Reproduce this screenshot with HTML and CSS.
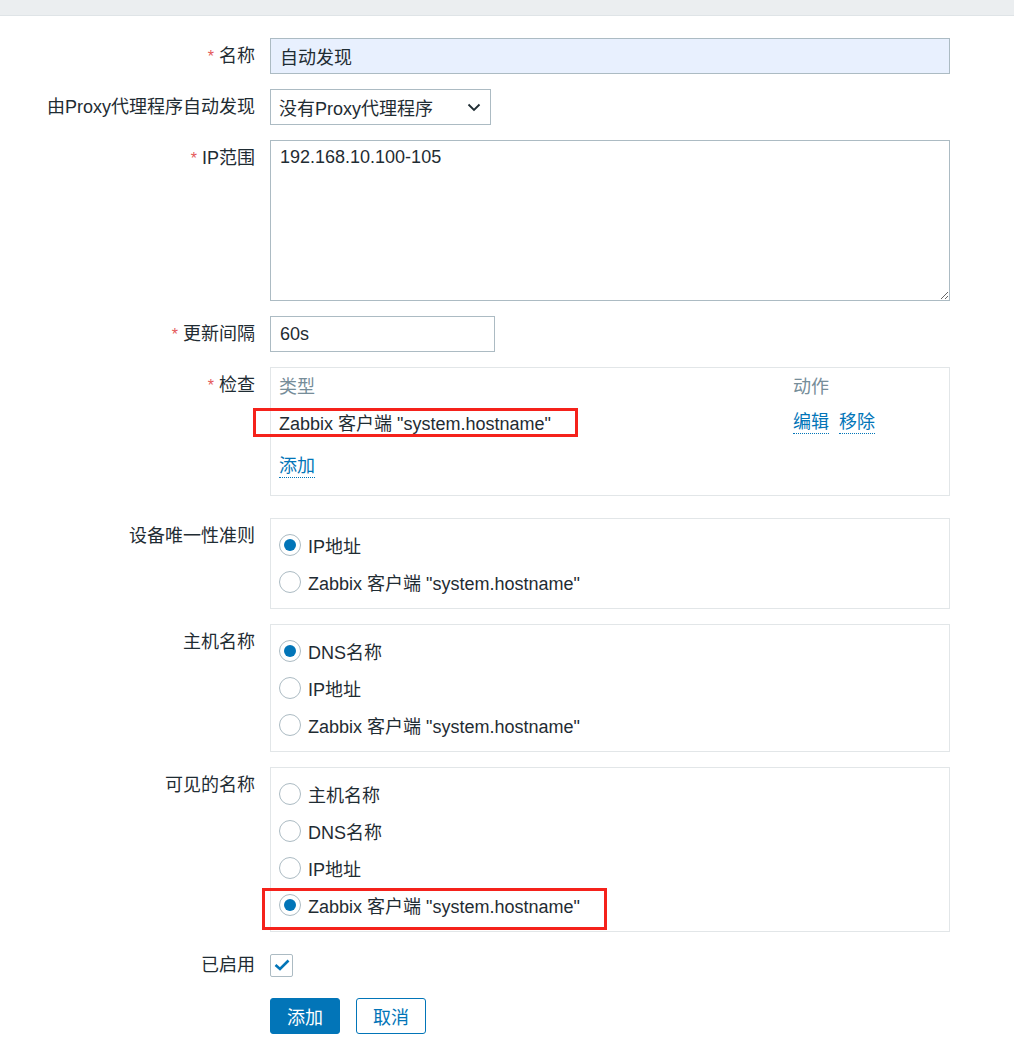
FILE: index.html
```html
<!DOCTYPE html>
<html lang="zh-CN">
<head>
  <meta charset="UTF-8">
  <meta name="viewport" content="width=device-width, initial-scale=1.0">
  <title>自动发现</title>
  <link rel="stylesheet" href="styles.css">
</head>
<body>

  <div class="top-bar"></div>

  <form class="form">
    <label class="label"><span class="req">*</span> 名称</label>
    <div class="field">
      <input class="input input-wide autofill" type="text" value="自动发现">
    </div>

    <label class="label">由Proxy代理程序自动发现</label>
    <div class="field">
      <div class="select">
        <span>没有Proxy代理程序</span>
        <svg width="14" height="9" viewBox="0 0 14 9"><path d="M1.5 1.5 L7 7 L12.5 1.5" fill="none" stroke="#1f2c33" stroke-width="1.8"/></svg>
      </div>
    </div>

    <label class="label"><span class="req">*</span> IP范围</label>
    <div class="field">
      <textarea class="textarea">192.168.10.100-105</textarea>
    </div>

    <label class="label"><span class="req">*</span> 更新间隔</label>
    <div class="field">
      <input class="input input-short" type="text" value="60s">
    </div>

    <label class="label"><span class="req">*</span> 检查</label>
    <div class="field">
      <div class="box check-box">
        <div class="check-head">
          <span>类型</span>
          <span>动作</span>
        </div>
        <div class="check-row">
          <span>Zabbix 客户端 "system.hostname"</span>
          <span class="actions"><a class="link">编辑</a><a class="link">移除</a></span>
        </div>
        <div class="check-add">
          <a class="link">添加</a>
        </div>
        <div class="mark mark-check"></div>
      </div>
    </div>

    <label class="label label-gap">设备唯一性准则</label>
    <div class="field label-gap">
      <ul class="box radio-list">
        <li><span class="radio on"></span>IP地址</li>
        <li><span class="radio"></span>Zabbix 客户端 "system.hostname"</li>
      </ul>
    </div>

    <label class="label">主机名称</label>
    <div class="field">
      <ul class="box radio-list">
        <li><span class="radio on"></span>DNS名称</li>
        <li><span class="radio"></span>IP地址</li>
        <li><span class="radio"></span>Zabbix 客户端 "system.hostname"</li>
      </ul>
    </div>

    <label class="label">可见的名称</label>
    <div class="field">
      <ul class="box radio-list visible-list">
        <li><span class="radio"></span>主机名称</li>
        <li><span class="radio"></span>DNS名称</li>
        <li><span class="radio"></span>IP地址</li>
        <li><span class="radio on"></span>Zabbix 客户端 "system.hostname"</li>
        <li class="mark mark-visible"></li>
      </ul>
    </div>

    <label class="label">已启用</label>
    <div class="field field-center">
      <span class="checkbox">
        <svg width="16" height="12" viewBox="0 0 16 12"><path d="M1.5 6 L6 10 L14.5 1.5" fill="none" stroke="#0275b8" stroke-width="2.6"/></svg>
      </span>
    </div>

    <div></div>
    <div class="field buttons">
      <button class="btn btn-primary" type="button">添加</button>
      <button class="btn btn-alt" type="button">取消</button>
    </div>
  </form>

</body>
</html>
```

FILE: styles.css
```css
body {
  margin: 0;
  font-family: 'Liberation Sans', 'Noto Sans CJK SC', sans-serif;
  font-size: 18px;
  color: #1f2c33;
  background: #fff;
}

.top-bar {
  height: 15px;
  background: #ebeef0;
  border-bottom: 1px solid #dfe4e7;
}

.form {
  display: grid;
  grid-template-columns: 255px 680px;
  column-gap: 15px;
  row-gap: 15px;
  margin-top: 22px;
}

.label {
  height: 36px;
  text-align: right;
  line-height: 36px;
  white-space: nowrap;
}

.label-gap {
  margin-top: 7px;
}

.req {
  color: #e45959;
  font-size: 16px;
}

.field {
  min-height: 36px;
}

.field-center {
  display: flex;
  align-items: center;
}

/* inputs */
.input,
.textarea {
  display: block;
  box-sizing: border-box;
  font: inherit;
  color: #1f2c33;
  border: 1px solid #acbbc3;
  background: #fff;
  padding: 0 9px;
  margin: 0;
  outline: none;
}

.input {
  height: 36px;
}

.input-wide {
  width: 680px;
}

.autofill {
  background: #e8f0fe;
}

.input-short {
  width: 225px;
}

.textarea {
  width: 680px;
  height: 161px;
  padding-top: 4px;
  line-height: 24px;
  resize: vertical;
}

.select {
  box-sizing: border-box;
  width: 221px;
  height: 36px;
  border: 1px solid #acbbc3;
  display: flex;
  align-items: center;
  justify-content: space-between;
  padding: 0 9px 0 8px;
}

.select svg {
  margin-top: 1px;
}

/* boxes */
.box {
  box-sizing: border-box;
  border: 1px solid #e2e6e8;
  margin: 0;
  padding: 7px 8px 8px;
  list-style: none;
}

.check-box {
  position: relative;
  height: 129px;
  padding-bottom: 7px;
}

.check-head,
.check-row {
  display: grid;
  grid-template-columns: 514px 1fr;
}

.check-head {
  height: 25px;
  line-height: 25px;
  color: #768d99;
}

.check-row,
.check-add {
  height: 44px;
  display: grid;
  align-items: center;
}

.actions {
  display: flex;
  gap: 10px;
}

.link {
  color: #0275b8;
  line-height: 22px;
  border-bottom: 1px dotted #0275b8;
  cursor: pointer;
}

.check-add .link {
  justify-self: start;
}

.radio-list {
  position: relative;
}

.radio-list li {
  display: flex;
  align-items: center;
  gap: 7px;
  height: 37px;
}

.radio {
  box-sizing: border-box;
  width: 22px;
  height: 22px;
  border: 1px solid #acbbc3;
  border-radius: 50%;
  display: flex;
  align-items: center;
  justify-content: center;
}

.radio.on::after {
  content: '';
  width: 12px;
  height: 12px;
  border-radius: 50%;
  background: #0275b8;
}

.checkbox {
  box-sizing: border-box;
  width: 23px;
  height: 23px;
  border: 1px solid #acbbc3;
  border-radius: 2px;
  display: flex;
  align-items: center;
  justify-content: center;
}

/* buttons */
.buttons {
  display: flex;
  gap: 16px;
}

.btn {
  height: 36px;
  padding: 0 16px;
  font: inherit;
  border-radius: 3px;
  cursor: pointer;
}

.btn-primary {
  background: #0275b8;
  border: 1px solid #0275b8;
  color: #fff;
}

.btn-alt {
  background: #fff;
  border: 1px solid #0275b8;
  color: #0275b8;
}

/* red annotation frames */
.mark {
  position: absolute;
  box-sizing: border-box;
  border: 3px solid #f5221b;
}

.mark-check {
  left: -18px;
  top: 40px;
  width: 325px;
  height: 29px;
}

.radio-list li.mark-visible {
  left: -9px;
  top: 120px;
  width: 345px;
  height: 42px;
}
```
